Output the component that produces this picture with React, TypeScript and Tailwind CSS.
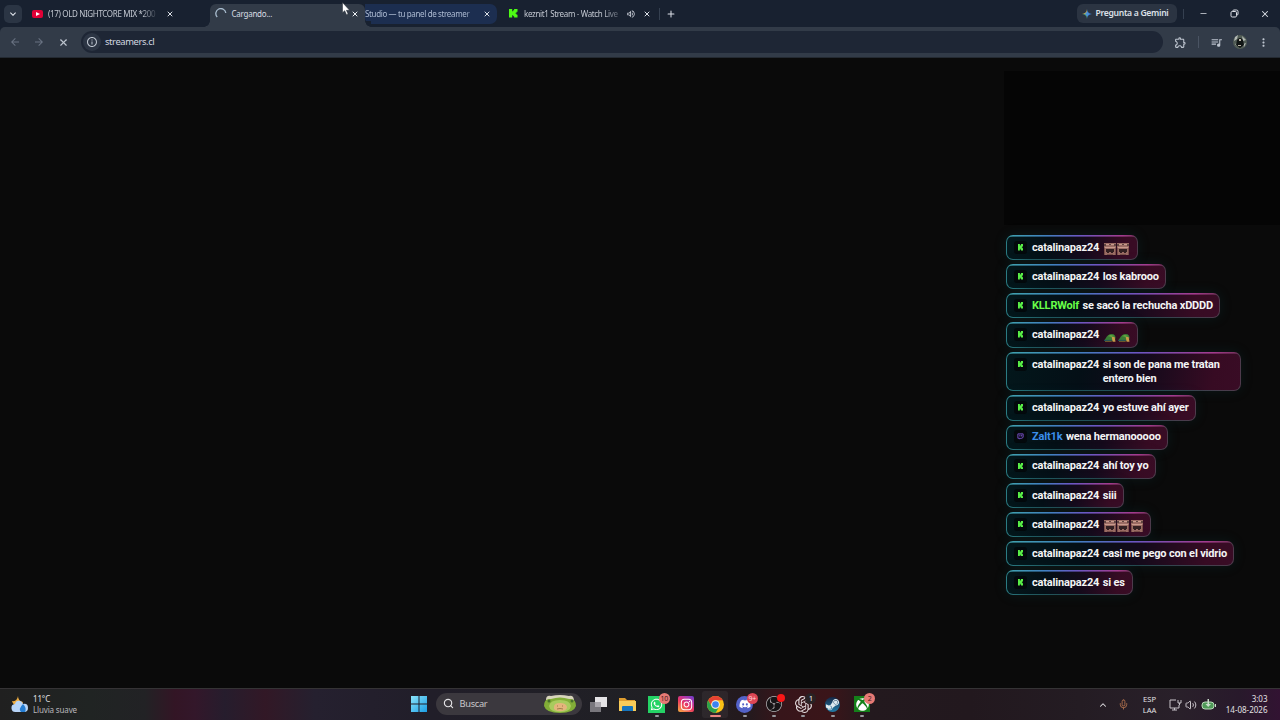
import type { ReactNode } from "react";
import { FaWhatsapp, FaInstagram, FaXbox, FaDiscord, FaSteamSymbol } from "react-icons/fa";
import { SiObsstudio, SiOpenai } from "react-icons/si";
import { MdQueueMusic, MdOutlineExtension, MdMoreVert, MdOutlineInfo, MdOutlineVolumeUp, MdKeyboardArrowDown, MdArrowBack, MdArrowForward } from "react-icons/md";
import { ChevronUp, Mic, Search, Volume2, X, Plus, Minus } from "lucide-react";

type Message = { user: string; text?: string; emotes?: "chest" | "frog"; count?: number; tone?: "green" | "blue"; width: string };

const messages: Message[] = [
  { user: "catalinapaz24", emotes: "chest", count: 2, width: "w-[132px]" },
  { user: "catalinapaz24", text: "los kabrooo", width: "w-[160px]" },
  { user: "KLLRWolf", text: "se sacó la rechucha xDDDD", tone: "green", width: "w-[214px]" },
  { user: "catalinapaz24", emotes: "frog", count: 2, width: "w-[132px]" },
  { user: "catalinapaz24", text: "si son de pana me tratan entero bien", width: "w-[235px]" },
  { user: "catalinapaz24", text: "yo estuve ahí ayer", width: "w-[190px]" },
  { user: "Zalt1k", text: "wena hermanooooo", tone: "blue", width: "w-[162px]" },
  { user: "catalinapaz24", text: "ahí toy yo", width: "w-[150px]" },
  { user: "catalinapaz24", text: "siii", width: "w-[118px]" },
  { user: "catalinapaz24", emotes: "chest", count: 3, width: "w-[145px]" },
  { user: "catalinapaz24", text: "casi me pego con el vidrio", width: "w-[228px]" },
  { user: "catalinapaz24", text: "si es", width: "w-[127px]" },
];

function KickMark({ className }: { className: string }) {
  return (
    <svg viewBox="0 0 9 9" className={className} fill="currentColor" preserveAspectRatio="none">
      <path d="M0 0h3.400v2.500h1V1.200h1V0H9v3H8v1H7v1h1v1h1v3H5.400V7.800h-1V6.500h-1V9H0z" />
    </svg>
  );
}

function ChestEmote() {
  return (
    <svg viewBox="0 0 12 12" className="size-3 shrink-0">
      <path fill="#9b6c64" d="M0 0h12v12H0z" />
      <path fill="#604541" d="M0 1h2v2H0zm5 0h2v1H5zm5 0h2v2h-2z" />
      <path fill="#c99b8d" d="M2 1h3v1H2zm5 0h3v1H7zM1 4h10v1H1z" />
      <path fill="#332022" d="M2 6h8v3H9v1H7V9H5v1H3V9H2z" />
      <path fill="#795049" d="M0 5h1v7H0zm11 0h1v7h-1zM3 11h6v1H3z" />
    </svg>
  );
}

function FrogEmote() {
  return (
    <svg viewBox="0 0 13 12" className="mt-px h-3 w-[12.5px] shrink-0">
      <path fill="#397b35" d="M2 7c1-2 3-4 6-4 3 0 4 2 4 4l-1 3H0z" />
      <path fill="#69a63e" d="M4 5l3-1 4 1-3 1z" />
      <path fill="#c99b49" d="M8 6h3l1 5H9z" />
      <path fill="#175064" d="M0 9h8v1H0z" />
      <path fill="#7a6a31" d="M1 10h7v1H1z" />
    </svg>
  );
}

function ChatBubble({ message }: { message: Message }) {
  const { user, text, emotes, count = 0, tone, width } = message;
  const color = tone === "green" ? "text-[#68ff48]" : tone === "blue" ? "text-[#3b8eea]" : "text-[#f3f4f5]";
  return (
    <div className={`${width} flex items-start rounded-[7px] border border-transparent pb-[3.75px] pl-[7px] pt-[4.75px] shadow-[0_0_13px_rgba(20,100,105,0.16)] [background:linear-gradient(90deg,#3fa3ad_0%,#4080bf_30%,#6a57c4_55%,#a33b8d_88%,#703158_100%)_border-box_top/100%_1.6px_no-repeat,linear-gradient(100deg,#03171b_0%,#040f16_32%,#150a1b_60%,#370b23_88%,#390c25_100%)_padding-box,linear-gradient(100deg,#2c7f87_0%,#205a60_20%,#25494f_60%,#4f3a4b_100%)_border-box]`}>
      <span className="mr-[5px] flex size-[13px] shrink-0 items-center justify-center rounded-[3px] bg-[#03090c]">
        {tone === "blue" ? (
          <svg viewBox="0 0 8 8" className="size-[7px]" fill="none" stroke="#8056d6">
            <path d="M1 1h6v4L5.500 6H4L3 7V6H1zM3.300 2v2M5.300 2v2" />
          </svg>
        ) : (
          <KickMark className="h-[6.5px] w-[5px] text-[#59ef47]" />
        )}
      </span>
      <div className="flex text-[11px] font-bold leading-[14.6px] tracking-[-0.17px]">
        <span className={`mr-[3.500px] shrink-0 ${color}`}>{user}</span>
        {text && <span className={text.length > 30 ? "w-[123px] text-[#f3f4f5]" : "whitespace-nowrap text-[#f3f4f5]"}>{text}</span>}
        {emotes && (
          <span className="mt-[2px] flex gap-[1.500px] pl-[1px]">
            {Array.from({ length: count }, (_, i) => (emotes === "chest" ? <ChestEmote key={i} /> : <FrogEmote key={i} />))}
          </span>
        )}
      </div>
    </div>
  );
}

function TabStrip() {
  return (
    <div className="flex h-[27px] bg-[#182130] text-[8px] tracking-[-0.35px] text-[#c3c8d1]">
      <div className="flex w-[210px] shrink-0 items-center">
        <div className="ml-1 flex size-[18px] items-center justify-center rounded-[5px] bg-[#2b3544]">
          <MdKeyboardArrowDown className="size-3 text-[#e4e8ee]" />
        </div>
        <div className="ml-[10px] flex h-2 w-[11px] items-center justify-center rounded-[2px] bg-[#e00036]">
          <svg viewBox="0 0 4 4" className="size-1" fill="#fff"><path d="m0 0 4 2-4 2z" /></svg>
        </div>
        <span className="ml-[5px] w-[111px] whitespace-nowrap [mask-image:linear-gradient(90deg,#000_84%,transparent)]">(17) OLD NIGHTCORE MIX *200</span>
        <X className="ml-[7px] size-[8px] text-[#dce0e7]" strokeWidth={3} />
      </div>
      <div className="relative mt-1 flex w-[155px] shrink-0 items-center rounded-t-[6px] bg-[#323b48] pb-1 pt-px">
        <span className="absolute -left-[6px] bottom-0 size-[6px] bg-[radial-gradient(circle_at_0_0,#182130_5.5px,#323b48_6px)]" />
        <svg viewBox="0 0 12 12" className="ml-[5px] size-3" fill="none" stroke="#a9bdcf" strokeWidth="1.3">
          <path d="M2.200 9A5 5 0 1 1 10.800 5" />
        </svg>
        <span className="ml-[4.500px] w-[119px] tracking-[-0.25px] text-[#d9dde4]">Cargando...</span>
        <X className="size-[8px] text-[#eef1f5]" strokeWidth={3} />
      </div>
      <div className="relative flex w-[132px] shrink-0 pt-1">
        <span className="absolute bottom-0 left-0 size-[6px] bg-[radial-gradient(circle_at_100%_0,#182130_5.5px,#323b48_6px)]" />
        <div className="flex h-[20px] w-full items-center rounded-bl-[6px] rounded-r-[7px] bg-[#1c2e50]">
          <span className="w-[109px] whitespace-nowrap tracking-[-0.36px] text-[#adbbd2] [mask-image:linear-gradient(90deg,#000_92%,rgba(0,0,0,0.3))]">Studio — tu panel de streamer</span>
          <X className="ml-[8.500px] size-[8px] text-[#dce0e7]" strokeWidth={3} />
        </div>
      </div>
      <div className="flex grow items-center">
        <KickMark className="ml-[12px] size-[8.500px] text-[#4dfb14]" />
        <span className="ml-[6.500px] w-[98px] whitespace-nowrap [mask-image:linear-gradient(90deg,#000_80%,rgba(0,0,0,0.2))]">keznit1 Stream - Watch Live</span>
        <MdOutlineVolumeUp className="ml-[3.500px] size-[10px]" />
        <X className="ml-[7px] size-[8px] text-[#dce0e7]" strokeWidth={3} />
        <span className="ml-[8px] h-3 w-px bg-[#354050]" />
        <Plus className="ml-[6px] size-[10px] text-[#dce0e7]" strokeWidth={2.5} />
        <div className="ml-auto mr-[6px] flex h-[19px] w-[100px] items-center rounded-[6px] bg-[#2b3442]">
          <svg viewBox="0 0 10 10" className="ml-[5px] size-[10px]">
            <path fill="#408ae0" d="M5 0C5.500 3.400 6.600 4.500 10 5 6.600 5.500 5.500 6.600 5 10Z" />
            <path fill="#d8bb55" d="M5 0C4.500 3.400 3.400 4.500 0 5h5z" />
            <path fill="#55a776" d="M0 5c3.400.5 4.500 1.600 5 5V5z" />
            <path fill="#4c8fd6" d="M5 2.500 7 5 5 7 3 5z" />
          </svg>
          <span className="ml-[4px] whitespace-nowrap text-[8.600px] font-semibold tracking-[-0.3px] text-[#dce0e7]">Pregunta a Gemini</span>
        </div>
        <span className="h-[10px] w-px bg-[#354050]" />
        <Minus className="ml-[15px] size-[9px] text-[#dce0e7]" />
        <svg viewBox="0 0 9 9" className="ml-[22px] size-[9px]" fill="none" stroke="#dce0e7">
          <rect x="1" y="2.5" width="5.5" height="5.5" rx="1.2" /><path d="M3 2V1.500Q3 1 4 1h2.500Q8 1 8 2.500V5q0 1-1 1" />
        </svg>
        <X className="ml-[21px] mr-[10.500px] size-[10px] text-[#dce0e7]" strokeWidth={2.5} />
      </div>
    </div>
  );
}

function Toolbar() {
  return (
    <div className="flex h-[31px] shrink-0 items-center rounded-t-[5px] border-b border-[#242a32] bg-[#323b48] text-[#bec5cf]">
      <MdArrowBack className="ml-[9px] size-[12px] text-[#697382]" />
      <MdArrowForward className="ml-[12px] size-[12px] text-[#697382]" />
      <X className="ml-[12.500px] size-[11px]" strokeWidth={2.5} />
      <div className="ml-[12px] flex h-[22px] w-[1082px] items-center rounded-full bg-[#1e2635]">
        <span className="ml-[2px] flex size-[18px] items-center justify-center rounded-full bg-[#2c3544]"><MdOutlineInfo className="size-[12px]" /></span>
        <span className="ml-[4.500px] text-[9.400px] tracking-[-0.38px] text-[#d3d8e0]">streamers.cl</span>
      </div>
      <MdOutlineExtension className="ml-[11.500px] size-[13px]" />
      <span className="ml-[10.500px] h-3 w-px bg-[#4a5463]" />
      <MdQueueMusic className="ml-[11px] size-[13px]" />
      <svg viewBox="0 0 14 14" className="ml-[10px] size-[14px]">
        <circle cx="7" cy="7" r="7" fill="#515c55" />
        <path fill="#b3b9b5" d="M2 2 5 0 4 4 1 6zm7-1 4 4-3 1zM2 9l3-1-1 3zM10 9l3-1-2 4z" />
        <path fill="#111615" d="M4 5q3-4 6 0l1 5-4 3-4-3z" /><path fill="#bdb6a9" d="M6 4h2v2H6zM5 10h3v1H5z" />
      </svg>
      <MdMoreVert className="ml-[10.500px] size-[13px]" />
    </div>
  );
}

function Badge({ children, className = "" }: { children?: ReactNode; className?: string }) {
  return <span className={`absolute -top-[3px] left-[10.500px] flex h-[11px] min-w-[11px] items-center justify-center rounded-full px-px text-[7px] leading-none tracking-[-0.3px] ${className}`}>{children}</span>;
}

function AppSlot({ children, active = false, running = true }: { children: ReactNode; active?: boolean; running?: boolean }) {
  return (
    <div className={`flex h-[27px] w-[26px] shrink-0 flex-col items-center rounded-[3px] pt-[5px] ${active ? "bg-white/5" : ""}`}>
      <div className="relative flex size-[17px] items-center justify-center">{children}</div>
      {running && <span className={`mt-[2px] h-[2px] shrink-0 rounded-full ${active ? "w-[11px] bg-[#ed8580]" : "w-[4px] bg-[#96979d]"}`} />}
    </div>
  );
}

function ChromeLogo() {
  return (
    <svg viewBox="0 0 20 20" className="size-[17px]">
      <circle cx="10" cy="10" r="10" fill="#fbc116" />
      <path fill="#e64233" d="M1.340 5A10 10 0 0 1 18.660 5H10a5 5 0 0 0-4.330 7.500z" />
      <path fill="#2ba24c" d="M1.340 5A10 10 0 0 0 10 20l4.330-7.500a5 5 0 0 1-8.660 0z" />
      <circle cx="10" cy="10" r="5" fill="#f3f5f6" /><circle cx="10" cy="10" r="3.9" fill="#3d83ef" />
    </svg>
  );
}

function Taskbar() {
  return (
    <div className="flex h-[32px] shrink-0 items-center border-t border-[#353335] bg-[linear-gradient(90deg,#202020_0,#202423_90px,#222225_145px,#331525_175px,#33172a_195px,#261d2d_225px,#321826_265px,#25202f_315px,#211e29_430px,#202024_660px,#24191d_750px,#37151a_780px,#3a1519_830px,#23191e_870px,#22181e_970px,#241c23_1080px,#29202a_1180px,#28192b_1240px,#321332_1280px)] text-[#e2e1e4]">
      <div className="flex w-[411px] shrink-0 items-center">
        <svg viewBox="0 0 18 18" className="ml-[11px] size-[18px]">
          <path fill="#eead42" d="M7 0q0 5 5 6-1 5-6 4-4-1-5-5 5 1 6-5z" />
          <path fill="#b7d4f7" d="M5 16a4 4 0 0 1-1-8q1-4 5-3 2 0 3 3 5-1 5 4 0 4-4 4z" />
          <path fill="#267ed2" d="M12 8q4 4 2 8h-4q-3-3 2-8" />
        </svg>
        <div className="ml-[4px] text-[8px] leading-[10.500px] tracking-[-0.15px]"><div>11°C</div><div className="text-[#b9b7bb]">Lluvia suave</div></div>
      </div>
      <div className="flex shrink-0 items-center pb-[2px]">
        <svg viewBox="0 0 16 16" className="size-4 shrink-0">
          <defs><linearGradient id="win" x2="1" y2="1"><stop stopColor="#8be4fa" /><stop offset="1" stopColor="#1b9ee5" /></linearGradient></defs>
          <path fill="url(#win)" d="M0 0h7.500v7.500H0zm8.500 0H16v7.500H8.500zM0 8.500h7.500V16H0zm8.500 0H16V16H8.500z" />
        </svg>
        <div className="ml-[8.500px] flex h-[22px] w-[146px] shrink-0 items-center rounded-full bg-[#3b383e]">
          <Search className="ml-[7px] size-[11px]" strokeWidth={2.5} />
          <span className="ml-[6px] w-[82px] text-[9.300px] tracking-[-0.32px] text-[#c9c7ca]">Buscar</span>
          <svg viewBox="0 0 34 20" className="ml-px h-[20px] w-[34px]">
            <path fill="#d8d4bc" d="M3 6q0-5 5-4 9-2 18 0 5-1 5 5-14 5-28-1" />
            <path fill="#82ad37" d="M1 12Q1 4 8 5q9-3 18 0 7-1 7 7-2 7-16 7T1 12" />
            <path fill="#a9cb5e" d="M6 12q1-6 11-6t11 6q-1 6-11 6T6 12" />
            <path fill="#e4b57d" d="M11 13q0-4 6-4t7 4q0 4-7 4t-6-4" />
            <circle cx="6" cy="7" r="1.5" fill="#47702c" /><circle cx="29" cy="7" r="1.5" fill="#47702c" />
            <path stroke="#a17d49" fill="none" d="M14 12h1m4 0h1M14 15q3-1 6 0" />
          </svg>
        </div>
        <div className="ml-[3.500px] flex shrink-0 gap-[3.350px] pt-px">
          <AppSlot running={false}><svg viewBox="0 0 17 17" className="size-[17px]"><path fill="#e5e3e6" d="M5 1h12v10H5z" /><path fill="#79777d" d="M0 6h11v10H0z" /><path fill="#aaa7ad" d="M5 6h6v5H5z" /></svg></AppSlot>
          <AppSlot running={false}><svg viewBox="0 0 17 17" className="size-[17px]"><path fill="#df9d2f" d="M0 2h6l2 2h8v5H0z" /><path fill="#f8cb59" d="M0 5h17v10H0z" /><path fill="#1674bd" d="M4 10h9q1 0 1 1v4H3v-4q0-1 1-1" /></svg></AppSlot>
          <AppSlot><span className="flex size-[17px] items-center justify-center bg-[#24d365]"><FaWhatsapp className="size-[13px] text-white" /></span><Badge className="bg-[#e77a75] text-[#44191b]">10</Badge></AppSlot>
          <AppSlot running={false}><span className="flex size-[16px] items-center justify-center rounded-[2px] bg-[linear-gradient(35deg,#f5b13e,#ed395f_45%,#b536a6_72%,#673fd0)]"><FaInstagram className="size-[13px] text-white" /></span></AppSlot>
          <AppSlot active><ChromeLogo /></AppSlot>
          <AppSlot><span className="flex size-[17px] items-center justify-center rounded-full bg-[#5362c8]"><FaDiscord className="size-[12px] text-white" /></span><Badge className="bg-[#dd4655] text-[#ffd6dd]">9+</Badge></AppSlot>
          <AppSlot><span className="rounded-full bg-[#171416]"><SiObsstudio className="size-[16px] text-[#b9b4b7]" /></span><span className="absolute -top-[2px] left-[11px] size-[8px] rounded-full bg-[#fa1717]" /></AppSlot>
          <AppSlot><SiOpenai className="size-[17px] text-[#e3dcde]" /><Badge className="bg-[#292224] text-white">1</Badge></AppSlot>
          <AppSlot><span className="flex size-[15px] items-center justify-center rounded-full bg-[linear-gradient(#152746,#237da8)]"><FaSteamSymbol className="size-[15px] text-[#dee9ef]" /></span></AppSlot>
          <AppSlot><span className="flex size-[16px] items-center justify-center bg-[#148019]"><FaXbox className="size-[13px] text-white" /></span><Badge className="bg-[#e77a75] text-[#44191b]">2</Badge></AppSlot>
        </div>
      </div>
      <div className="ml-auto flex shrink-0 items-center text-[8px] leading-[10.500px]">
        <ChevronUp className="size-[10px]" strokeWidth={2.5} />
        <Mic className="ml-[10px] size-[11px] text-[#af714e]" />
        <div className="ml-[12.500px] w-[16px] text-center text-[7.600px]"><div>ESP</div><div>LAA</div></div>
        <svg viewBox="0 0 13 12" className="ml-[11px] h-3 w-[13px]" fill="none" stroke="#c9c4ca"><path d="M7 1H1v8h9V6M3 11h5M5.500 9v2M9 1v3h3V1M10.500 4v2" /></svg>
        <Volume2 className="ml-[3px] size-[12px] text-[#c9c4ca]" />
        <svg viewBox="0 0 15 12" className="ml-[4px] h-3 w-[15px]"><rect x="1" y="3" width="12" height="7" rx="3" fill="#4f9a58" stroke="#b9d9b9" /><path fill="#c8ddc9" d="M14 5h1v3h-1zM6.500 0h1.500v5h2L7.200 8 4.500 5h2z" /></svg>
        <div className="ml-[6px] mr-[12.500px] w-[46px] whitespace-nowrap text-right"><div>3:03</div><div>14-08-2026</div></div>
      </div>
    </div>
  );
}

export default function App() {
  return (
    <div className="relative flex h-[720px] w-[1280px] flex-col overflow-hidden bg-[#182130] [font-family:'Noto_Sans','Open_Sans',sans-serif]">
      <TabStrip />
      <Toolbar />
      <main className="flex grow justify-end bg-[#0a0a0a]">
        <aside className="w-[276px] pt-[13px] [font-family:Roboto,sans-serif]">
          <div className="mb-[10px] h-[154px] bg-[#050505]" />
          <div className="flex flex-col gap-[4px] pl-[2px]">
            {messages.map((message, index) => <ChatBubble key={index} message={message} />)}
          </div>
        </aside>
      </main>
      <Taskbar />
      <svg viewBox="0 0 9 13" className="absolute left-[342px] top-[2px] h-[13px] w-[9px]"><path fill="#fff" stroke="#202631" strokeWidth=".5" d="M.5.5v10.200l2.200-2 1.800 4 1.600-.7-1.700-3.700h3.200z" /></svg>
    </div>
  );
}
